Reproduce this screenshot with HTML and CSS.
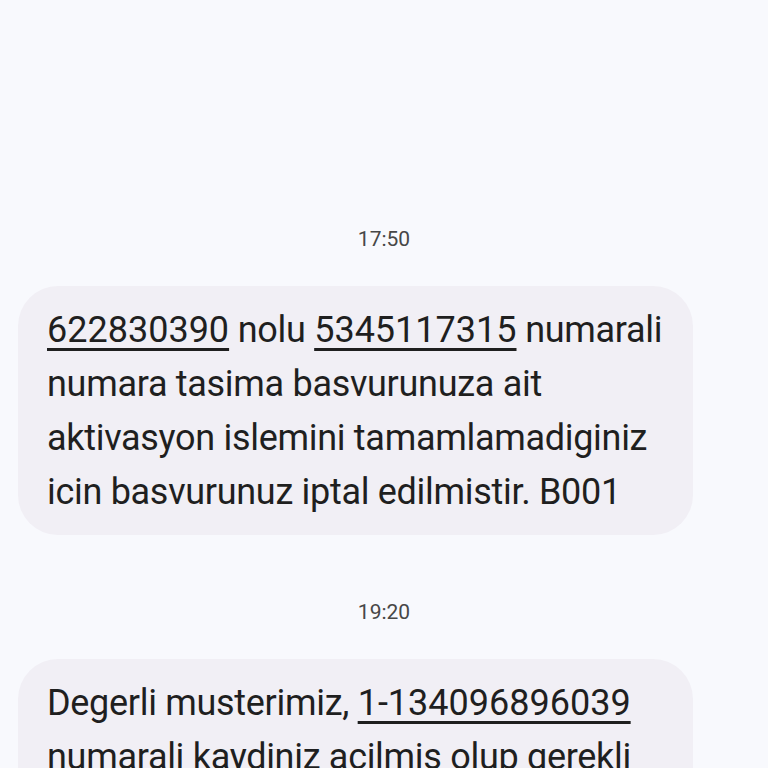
FILE: index.html
```html
<!DOCTYPE html>
<html lang="tr">
<head>
<meta charset="UTF-8" />
<meta name="viewport" content="width=device-width, initial-scale=1" />
<title>Mesajlar</title>
<link rel="stylesheet" href="styles.css">
</head>
<body>

<div class="thread">
  <div class="stamp">17:50</div>
  <div class="bubble">
    <a class="link">622830390</a> nolu <a class="link">5345117315</a> numarali
    numara tasima basvurunuza ait aktivasyon islemini tamamlamadiginiz
    icin basvurunuz iptal edilmistir. B001
  </div>

  <div class="stamp">19:20</div>
  <div class="bubble">
    Degerli musterimiz, <a class="link">1-134096896039</a>
    numarali kaydiniz acilmis olup gerekli islemler tamamlanmistir.
    Bilgilerinize sunariz. B001
  </div>
</div>

</body>
</html>
```

FILE: styles.css
```css
html, body {
  margin: 0;
  height: 100%;
  overflow: hidden;
}
body {
  font-family: Roboto, "Noto Sans", sans-serif;
  background: #f8f9fd;
  color: #1f1f1f;
}
.thread {
  display: flex;
  flex-direction: column;
  align-items: flex-start;
  padding: 225px 75px 0 18px;
}
.stamp {
  align-self: stretch;
  text-align: center;
  font-size: 21px;
  line-height: 28px;
  color: #474747;
  padding-left: 57px;
  margin-bottom: 33px;
}
.bubble {
  background: #f1eff5;
  border-radius: 40px;
  padding: 17px 28px 16px 29px;
  font-size: 36px;
  line-height: 54px;
  letter-spacing: -0.3px;
  margin-bottom: 63px;
}
.link {
  color: inherit;
  letter-spacing: 0;
  text-decoration: underline;
  text-decoration-thickness: 3px;
  text-underline-offset: 6px;
}
```
